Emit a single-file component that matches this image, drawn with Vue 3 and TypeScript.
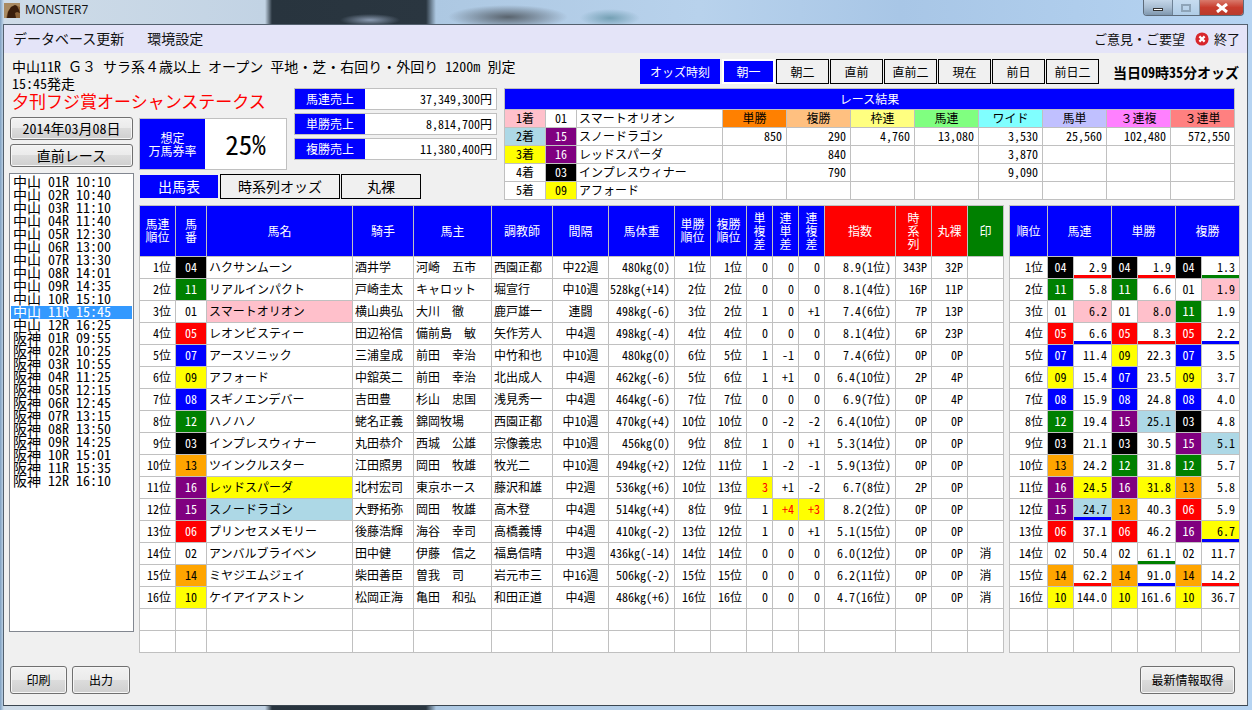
<script setup lang="ts">
interface Runner {
  rank: string; no: string; name: string; jockey: string; owner: string; trainer: string; gap: string;
  weight: string; win: string; place: string; d1: string; d2: string; d3: string; index: string; ts: string; naked: string; mark: string;
}
const raw = `1位|04|ハクサンムーン|酒井学|河崎　五市|西園正都|中22週|480kg(0)|1位|1位|0|0|0|8.9(1位)|343P|32P|
2位|11|リアルインパクト|戸崎圭太|キャロット|堀宣行|中10週|528kg(+14)|2位|2位|0|0|0|8.1(4位)|16P|11P|
3位|01|スマートオリオン|横山典弘|大川　徹|鹿戸雄一|連闘|498kg(-6)|3位|2位|1|0|+1|7.4(6位)|7P|13P|
4位|05|レオンビスティー|田辺裕信|備前島　敏|矢作芳人|中4週|498kg(-4)|4位|4位|0|0|0|8.1(4位)|6P|23P|
5位|07|アースソニック|三浦皇成|前田　幸治|中竹和也|中10週|480kg(0)|6位|5位|1|-1|0|7.4(6位)|0P|0P|
6位|09|アフォード|中舘英二|前田　幸治|北出成人|中4週|462kg(-6)|5位|6位|1|+1|0|6.4(10位)|2P|4P|
7位|08|スギノエンデバー|吉田豊|杉山　忠国|浅見秀一|中4週|464kg(-6)|7位|7位|0|0|0|6.9(7位)|0P|4P|
8位|12|ハノハノ|蛯名正義|錦岡牧場|西園正都|中10週|470kg(+4)|10位|10位|0|-2|-2|6.4(10位)|0P|0P|
9位|03|インプレスウィナー|丸田恭介|西城　公雄|宗像義忠|中10週|456kg(0)|9位|8位|1|0|+1|5.3(14位)|0P|0P|
10位|13|ツインクルスター|江田照男|岡田　牧雄|牧光二|中10週|494kg(+2)|12位|11位|1|-2|-1|5.9(13位)|0P|0P|
11位|16|レッドスパーダ|北村宏司|東京ホース|藤沢和雄|中2週|536kg(+6)|10位|13位|3|+1|-2|6.7(8位)|2P|0P|
12位|15|スノードラゴン|大野拓弥|岡田　牧雄|高木登|中4週|514kg(+4)|8位|9位|1|+4|+3|8.2(2位)|0P|0P|
13位|06|プリンセスメモリー|後藤浩輝|海谷　幸司|高橋義博|中4週|410kg(-2)|13位|12位|1|0|+1|5.1(15位)|0P|0P|
14位|02|アンバルブライベン|田中健|伊藤　信之|福島信晴|中3週|436kg(-14)|14位|14位|0|0|0|6.0(12位)|0P|0P|消
15位|14|ミヤジエムジェイ|柴田善臣|曽我　司|岩元市三|中16週|506kg(-2)|15位|15位|0|0|0|6.2(11位)|0P|0P|消
16位|10|ケイアイアストン|松岡正海|亀田　和弘|和田正道|中4週|486kg(+6)|16位|16位|0|0|0|4.7(16位)|0P|0P|消`;
const runners: Runner[] = raw.split("\n").map((l) => {
  const p = l.split("|");
  return { rank: p[0], no: p[1], name: p[2], jockey: p[3], owner: p[4], trainer: p[5], gap: p[6], weight: p[7], win: p[8], place: p[9], d1: p[10], d2: p[11], d3: p[12], index: p[13], ts: p[14], naked: p[15], mark: p[16] };
});
const frameOf = (no: string): string => {
  if (!no) return "";
  return ["w", "k", "r", "b", "y", "g", "o", "p"][Math.floor((Number(no) - 1) / 2)];
};
const tintOf = (no: string): string => ({ "01": "pink", "16": "gold", "15": "sky" } as Record<string, string>)[no] ?? "";
const alert = (i: number, key: string): boolean => (i === 10 && key === "d1") || (i === 11 && (key === "d2" || key === "d3"));

const oddsRaw = `04 2.9 r|04 1.9 r|04 1.3 g
11 5.8|11 6.6|01 1.9
01 6.2|01 8.0|11 1.9
05 6.6 b|05 8.3 r|05 2.2 b
07 11.4|09 22.3|07 3.5
09 15.4|07 23.5|09 3.7
08 15.9|08 24.8|08 4.0
12 19.4|15 25.1|03 4.8
03 21.1|03 30.5|15 5.1
13 24.2|12 31.8|12 5.7
16 24.5|16 31.8|13 5.8
15 24.7 b|13 40.3|06 5.9
06 37.1|06 46.2|16 6.7 b
02 50.4|02 61.1 g|02 11.7
14 62.2 r|14 91.0 b|14 14.2 r
10 144.0|10 161.6|10 36.7`;
const odds = oddsRaw.split("\n").map((l) => l.split("|").map((c) => {
  const [no, val, line] = c.split(" ");
  return { no, val, line: line ? "ul-" + line : "" };
}));

const races = [
  "中山 01R 10:10", "中山 02R 10:40", "中山 03R 11:10", "中山 04R 11:40", "中山 05R 12:30", "中山 06R 13:00",
  "中山 07R 13:30", "中山 08R 14:01", "中山 09R 14:35", "中山 10R 15:10", "中山 11R 15:45", "中山 12R 16:25",
  "阪神 01R 09:55", "阪神 02R 10:25", "阪神 03R 10:55", "阪神 04R 11:25", "阪神 05R 12:15", "阪神 06R 12:45",
  "阪神 07R 13:15", "阪神 08R 13:50", "阪神 09R 14:25", "阪神 10R 15:01", "阪神 11R 15:35", "阪神 12R 16:10",
];
const sales = [["馬連売上", "37,349,300円"], ["単勝売上", "8,814,700円"], ["複勝売上", "11,380,400円"]];
const timeBtns = ["朝二", "直前", "直前二", "現在", "前日", "前日二"];
const betTypes = [["単勝", "c1"], ["複勝", "c2"], ["枠連", "c3"], ["馬連", "c4"], ["ワイド", "c5"], ["馬単", "c6"], ["３連複", "c7"], ["３連単", "c8"]];
const results = [
  { pos: "2着", tint: "sky", no: "15", name: "スノードラゴン", vals: ["850", "290", "4,760", "13,080", "3,530", "25,560", "102,480", "572,550"] },
  { pos: "3着", tint: "gold", no: "16", name: "レッドスパーダ", vals: ["", "840", "", "", "3,870", "", "", ""] },
  { pos: "4着", tint: "", no: "03", name: "インプレスウィナー", vals: ["", "790", "", "", "9,090", "", "", ""] },
  { pos: "5着", tint: "", no: "09", name: "アフォード", vals: ["", "", "", "", "", "", "", ""] },
];
const heads = [
  ["馬連\n順位", ""], ["馬\n番", ""], ["馬名", ""], ["騎手", ""], ["馬主", ""], ["調教師", ""], ["間隔", ""], ["馬体重", ""],
  ["単勝\n順位", ""], ["複勝\n順位", ""], ["単\n複\n差", ""], ["連\n単\n差", ""], ["連\n複\n差", ""], ["指数", "red"], ["時\n系\n列", "red"], ["丸裸", "red"], ["印", "green"],
];
const blankRows = [0, 1];
</script>

<template>
  <div class="window">
    <header class="titlebar">
      <svg class="app-icon" viewBox="0 0 16 15" width="16" height="15" aria-hidden="true">
        <rect width="16" height="15" fill="#8a6238" />
        <path d="M0 0h16v4l-5-2-4 2-3 4-2 7H0z" fill="#a98a62" />
        <path d="M3 15l1-6 3-5 4-2 2 1 2 4 1 3-3-1-2 1 1 5z" fill="#3a1e0c" />
      </svg>
      <span class="app-name">MONSTER7</span>
      <div class="caption">
        <span class="cap-btn cap-min"><i></i></span>
        <span class="cap-btn cap-max"><i></i></span>
        <span class="cap-btn cap-close">
          <svg viewBox="0 0 14 10" width="14" height="10" aria-hidden="true"><path d="M2 1l10 8M12 1L2 9" stroke="#fff" stroke-width="3" /></svg>
        </span>
      </div>
    </header>

    <div class="client">
      <nav class="menu">
        <span class="menu-item">データベース更新</span>
        <span class="menu-item">環境設定</span>
        <span class="menu-right">
          <span class="opinion">ご意見・ご要望</span>
          <svg class="quit-icon" viewBox="0 0 14 14" width="14" height="14" aria-hidden="true">
            <circle cx="7" cy="7" r="6.6" fill="#d8262c" />
            <path d="M4.4 4.4l5.2 5.2M9.6 4.4l-5.2 5.2" stroke="#fff" stroke-width="2.2" />
          </svg>
          <span class="opinion">終了</span>
        </span>
      </nav>

      <main class="body">
        <div class="head">
          <div class="info">
            <div>中山<span class="hw">11R</span> Ｇ３ サラ系４歳以上 オープン 平地・芝・右回り・外回り <span class="hw">1200m</span> 別定</div>
            <div class="hw">15:45発走</div>
          </div>
          <div class="timebar">
            <span class="time-label">オッズ時刻</span>
            <span class="time-btn active">朝一</span>
            <span v-for="t in timeBtns" :key="t" class="time-btn">{{ t }}</span>
            <strong class="time-now">当日09時35分オッズ</strong>
          </div>
        </div>

        <h1 class="race-title">夕刊フジ賞オーシャンステークス</h1>

        <div class="sales">
          <div v-for="s in sales" :key="s[0]" class="sale-row">
            <span class="sale-label">{{ s[0] }}</span>
            <span class="sale-value">{{ s[1] }}</span>
          </div>
        </div>

        <section class="result">
          <div class="res-title">レース結果</div>
          <div class="rc pink center">1着</div>
          <div class="rc center">01</div>
          <div class="rc">スマートオリオン</div>
          <div v-for="b in betTypes" :key="b[0]" class="rc center" :class="b[1]">{{ b[0] }}</div>
          <template v-for="r in results" :key="r.pos">
            <div class="rc center" :class="r.tint">{{ r.pos }}</div>
            <div class="rc center" :class="'f-' + frameOf(r.no)">{{ r.no }}</div>
            <div class="rc">{{ r.name }}</div>
            <div v-for="(v, i) in r.vals" :key="i" class="rc right">{{ v }}</div>
          </template>
        </section>

        <div class="stack">
          <button class="btn date-btn">2014年03月08日</button>
          <button class="btn date-btn">直前レース</button>
        </div>

        <div class="rate">
          <div class="rate-label">想定<br />万馬券率</div>
          <div class="rate-value">25%</div>
        </div>

        <div class="tabs">
          <span class="tab on">出馬表</span>
          <span class="tab t2">時系列オッズ</span>
          <span class="tab t3">丸裸</span>
        </div>

        <ul class="races">
          <li v-for="(r, i) in races" :key="r" :class="{ sel: i === 10 }">{{ r }}</li>
        </ul>

        <div class="tables">
          <section class="grid main-grid">
            <div v-for="h in heads" :key="h[0]" class="hd" :class="h[1]">{{ h[0] }}</div>
            <template v-for="(r, i) in runners" :key="r.no">
              <div class="c right">{{ r.rank }}</div>
              <div class="c center" :class="'f-' + frameOf(r.no)">{{ r.no }}</div>
              <div class="c" :class="tintOf(r.no)">{{ r.name }}</div>
              <div class="c">{{ r.jockey }}</div>
              <div class="c owner">{{ r.owner }}</div>
              <div class="c">{{ r.trainer }}</div>
              <div class="c center">{{ r.gap }}</div>
              <div class="c right">{{ r.weight }}</div>
              <div class="c right">{{ r.win }}</div>
              <div class="c right">{{ r.place }}</div>
              <div class="c right" :class="{ alert: alert(i, 'd1') }">{{ r.d1 }}</div>
              <div class="c right" :class="{ alert: alert(i, 'd2') }">{{ r.d2 }}</div>
              <div class="c right" :class="{ alert: alert(i, 'd3') }">{{ r.d3 }}</div>
              <div class="c right">{{ r.index }}</div>
              <div class="c right">{{ r.ts }}</div>
              <div class="c right">{{ r.naked }}</div>
              <div class="c center">{{ r.mark }}</div>
            </template>
            <template v-for="b in blankRows" :key="b">
              <div v-for="n in 17" :key="n" class="c"></div>
            </template>
          </section>

          <section class="grid odds-grid">
            <div class="hd">順位</div>
            <div class="hd span2">馬連</div>
            <div class="hd span2">単勝</div>
            <div class="hd span2">複勝</div>
            <template v-for="(row, i) in odds" :key="i">
              <div class="c right">{{ i + 1 }}位</div>
              <template v-for="(cell, j) in row" :key="j">
                <div class="c center" :class="'f-' + frameOf(cell.no)">{{ cell.no }}</div>
                <div class="c right" :class="[tintOf(cell.no), cell.line]">{{ cell.val }}</div>
              </template>
            </template>
            <template v-for="b in blankRows" :key="b">
              <div v-for="n in 7" :key="n" class="c"></div>
            </template>
          </section>
        </div>

        <footer class="foot">
          <button class="btn foot-btn">印刷</button>
          <button class="btn foot-btn second">出力</button>
          <button class="btn foot-btn latest">最新情報取得</button>
        </footer>
      </main>
    </div>
  </div>
</template>

<style>
html, body { margin: 0; padding: 0; background: #b5d0ea; }
</style>

<style scoped>
.window {
  width: 1252px;
  height: 710px;
  display: flex;
  flex-direction: column;
  overflow: hidden;
  box-sizing: border-box;
  color: #000;
  font-family: "Noto Sans CJK JP", "Liberation Sans", sans-serif;
  font-size: 12px;
  font-feature-settings: "hwid";
  background:
    linear-gradient(90deg, #7f9fc0 0, #b9cfe4 3px, transparent 4px),
    radial-gradient(ellipse 60px 12px at 508px 17px, #59636d, transparent),
    radial-gradient(ellipse 30px 9px at 610px 18px, #74a0b4, transparent),
    radial-gradient(ellipse 30px 6px at 370px 20px, #8a9ab0, transparent),
    linear-gradient(90deg, #cfdce8 0, #c2d3e4 265px, #28343e 272px, #2a3640 426px, #adc8e2 436px, #b8d2ec 700px, #a8c6e6 900px, #b6d4f2 1252px);
}
.titlebar {
  height: 24px;
  flex: none;
  display: flex;
  align-items: flex-start;
  padding-left: 4px;
}
.app-icon { margin-top: 3px; }
.app-name {
  margin: 3px 0 0 5px;
  font: 12px/14px "Open Sans", sans-serif;
  font-feature-settings: normal;
  color: #111;
}
.caption { margin-left: auto; margin-right: 8px; display: flex; height: 15px; border: 1px solid #5d6b7a; border-top: 0; border-radius: 0 0 4px 4px; overflow: hidden; }
.cap-btn { display: flex; align-items: center; justify-content: center; height: 100%; }
.cap-min { width: 28px; background: linear-gradient(#c4d6e8, #a8bdd2 50%, #7f97ae); border-right: 1px solid #6e8296; }
.cap-min i { width: 10px; height: 3px; background: #fff; border: 1px solid #333; box-sizing: border-box; margin-top: 4px; }
.cap-max { width: 26px; background: linear-gradient(#c6dcf0, #b0cce6); border-right: 1px solid #7d8fa0; }
.cap-max i { width: 10px; height: 8px; border: 2px solid #8ea4b8; box-sizing: border-box; }
.cap-close { width: 43px; background: linear-gradient(#d97a6c, #c83d2e 50%, #b93a2c); }

.client {
  flex: 1;
  min-height: 0;
  margin: 0 4px 4px 3px;
  border: 1px solid #53606e;
  border-bottom-color: #3b4650;
  background: #f0f0f0;
  display: flex;
  flex-direction: column;
}
.menu {
  height: 28px;
  flex: none;
  box-sizing: border-box;
  background: #e4e4f8;
  display: flex;
  align-items: center;
  padding: 0 7px 2px 9px;
  font-size: 14px;
  gap: 23px;
  color: #111;
}
.menu-right { margin-left: auto; display: flex; align-items: center; gap: 5px; }
.opinion { font-size: 13px; font-feature-settings: normal; }
.quit-icon { margin-left: 5px; margin-top: 2px; }

.body {
  flex: 1;
  min-height: 0;
  display: grid;
  grid-template-columns: 125px 5px 148px 7px 203px 7px 1fr;
  grid-template-rows: 35px 29px 53px 35px 448px auto;
  padding-left: 5px;
}
.head { grid-column: 1 / -1; grid-row: 1; display: flex; }
.info {
  width: 631px;
  flex: none;
  box-sizing: border-box;
  padding: 5px 0 0 3px;
  font-size: 14px;
  line-height: 17px;
  white-space: nowrap;
  word-spacing: 3.9px;
  font-feature-settings: normal;
}
.hw { font-feature-settings: "hwid"; }
.timebar { display: flex; align-items: stretch; gap: 1px; padding-top: 6px; height: 25px; }
.time-label { width: 80px; background: #00f; color: #fff; display: flex; align-items: center; justify-content: center; margin-right: 1px; padding-bottom: 1px; box-sizing: border-box; }
.time-btn { width: 51px; border: 1px solid #000; background: #f0f0f0; display: flex; align-items: center; justify-content: center; padding-bottom: 1px; }
.time-btn.active { width: 49px; background: #00f; color: #fff; border: 2px solid #fff; }
.time-now { margin-left: 13px; font-size: 14px; align-self: center; white-space: nowrap; }

.race-title {
  grid-column: 1 / 5;
  grid-row: 2;
  margin: 0;
  padding: 1px 0 0 3px;
  font-size: 17px;
  line-height: 24px;
  font-weight: 400;
  color: #f00;
  white-space: nowrap;
}
.sales { grid-column: 5; grid-row: 2 / 4; display: flex; flex-direction: column; gap: 3px; }
.sale-row { height: 22px; box-sizing: border-box; border: 1px solid #c0c0c0; display: flex; background: #fff; }
.sale-label { width: 70px; background: #00f; color: #fff; display: flex; align-items: center; justify-content: center; padding-bottom: 1px; box-sizing: border-box; }
.sale-value { flex: 1; text-align: right; padding-right: 4px; line-height: 19px; }

.result {
  grid-column: 7;
  grid-row: 2 / 5;
  width: 731px;
  height: 112px;
  display: grid;
  grid-template-columns: 40px 30px 145px repeat(8, 63px);
  grid-template-rows: 20px repeat(5, 17px);
  gap: 1px;
  padding: 1px;
  box-sizing: border-box;
  background: #c0c0c0;
}
.res-title { grid-column: 1 / -1; background: #00f; color: #fff; text-align: center; line-height: 19px; }
.rc { background: #fff; line-height: 16px; padding-left: 2px; white-space: nowrap; overflow: hidden; }
.rc.center { text-align: center; padding: 0; }
.rc.right { text-align: right; padding: 0 4px 0 0; }
.c1 { background: #ff8000; } .c2 { background: #ffc080; } .c3 { background: #ffff80; } .c4 { background: #80ff80; }
.c5 { background: #80ffff; } .c6 { background: #c0c0ff; }
.c7 { background: #ff80ff; font-feature-settings: normal; }
.c8 { background: #ff8080; font-feature-settings: normal; }

.stack { grid-column: 1; grid-row: 3; display: flex; flex-direction: column; gap: 4px; padding: 0 1px; }
.btn {
  box-sizing: border-box;
  border: 1px solid #707070;
  border-radius: 3px;
  box-shadow: inset 0 0 0 1px #f6f6f6;
  background: linear-gradient(#f2f2f2 0, #ebebeb 48%, #dcdcdc 50%, #cfcfcf 100%);
  color: #000;
  font-family: inherit;
  font-feature-settings: inherit;
  padding: 0 0 2px;
}
.date-btn { height: 23px; font-size: 14px; line-height: 18px; }

.rate { grid-column: 3; grid-row: 3; height: 52px; box-sizing: border-box; border: 1px solid #c0c0c0; background: #fff; display: flex; margin-top: 1px; }
.rate-label { width: 65px; background: #00f; color: #fff; text-align: center; line-height: 13px; padding-top: 12px; box-sizing: border-box; }
.rate-value { flex: 1; text-align: center; font-size: 27px; line-height: 49px; }

.tabs { grid-column: 3 / 7; grid-row: 4; display: flex; align-items: flex-start; padding: 4px 0 0 1px; font-size: 14px; }
.tab { height: 25px; box-sizing: border-box; border: 1px solid #000; display: flex; align-items: center; justify-content: center; padding-bottom: 2px; }
.tab.on { width: 78px; height: 23px; margin: 1px 2px 0 0; background: #00f; color: #fff; border: 0; }
.tab.t2 { width: 120px; margin-right: 1px; }
.tab.t3 { width: 80px; }

.races {
  grid-column: 1;
  grid-row: 4 / 6;
  margin: 3px 0 0;
  padding: 2px 1px;
  list-style: none;
  box-sizing: border-box;
  height: 459px;
  background: #fff;
  border: 1px solid #828790;
  font-size: 14px;
  line-height: 11px;
}
.races li { height: 13px; padding-left: 2px; white-space: pre; }
.races li.sel { background: #3399ff; color: #fff; }

.tables { grid-column: 3 / -1; grid-row: 5; display: flex; gap: 5px; }
.grid {
  display: grid;
  gap: 1px;
  padding: 1px;
  background: #c0c0c0;
  height: 448px;
  box-sizing: border-box;
  grid-template-rows: 50px repeat(18, 21px);
}
.main-grid { grid-template-columns: 35px 30px 145px 60px 77px 60px 55px 65px 35px 35px 25px 25px 25px 70px 35px 35px 35px; }
.odds-grid { grid-template-columns: 37px 25px 37px 25px 37px 25px 37px; }
.hd {
  background: #00f;
  color: #fff;
  white-space: pre-line;
  text-align: center;
  line-height: 13px;
  display: flex;
  align-items: center;
  justify-content: center;
  padding-bottom: 2px;
  box-sizing: border-box;
}
.hd.red { background: #f00; }
.hd.green { background: #008000; }
.span2 { grid-column: span 2; }
.c { background: #fff; line-height: 19px; padding-left: 2px; white-space: nowrap; overflow: hidden; }
.c.owner { font-feature-settings: normal; }
.c.center { text-align: center; padding: 0; }
.c.right { text-align: right; padding: 0 4px 0 0; }
.alert { background: #ff0; color: #f00; }
.ul-r { box-shadow: inset 0 -3px 0 #f00; }
.ul-b { box-shadow: inset 0 -3px 0 #00f; }
.ul-g { box-shadow: inset 0 -3px 0 #008000; }
.pink { background: #ffc0cb; }
.gold { background: #ff0; }
.sky { background: #add8e6; }
.f-k { background: #000; color: #fff; }
.f-g { background: #008000; color: #fff; }
.f-r { background: #f00; color: #fff; }
.f-b { background: #00f; color: #fff; }
.f-p { background: #800080; color: #fff; }
.f-y { background: #ff0; }
.f-o { background: #ffa500; }
.f-w { background: #fff; }

.foot { grid-column: 1 / -1; grid-row: 6; display: flex; align-items: flex-start; gap: 5px; padding: 13px 12px 0 1px; }
.foot-btn { width: 57px; height: 28px; font-size: 12px; }
.foot-btn.second { width: 58px; }
.foot-btn.latest { width: 95px; margin-left: auto; }
</style>
